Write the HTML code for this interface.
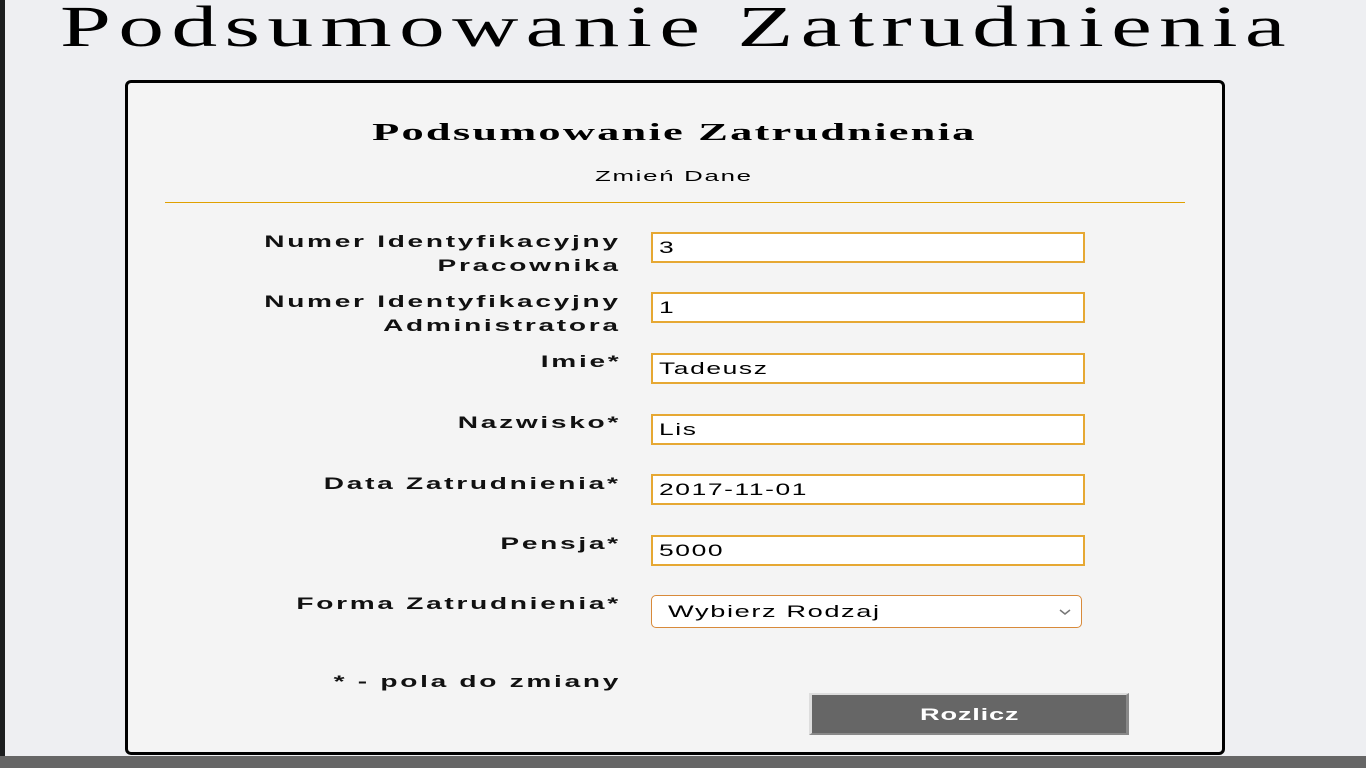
<!DOCTYPE html>
<html><head><meta charset="utf-8"><style>
body{margin:0;width:1366px;height:768px;background:#eeeff2;position:relative;overflow:hidden;font-family:"Liberation Sans",sans-serif}
.lstrip{position:absolute;left:0;top:0;width:5px;height:768px;background:#1c1e1f}
.bstrip{position:absolute;left:0;top:756px;width:1366px;height:12px;background:#666}
h1{position:absolute;left:60px;top:-7px;margin:0;font-family:"Liberation Serif",serif;font-weight:normal;font-size:58px;letter-spacing:4.6px;white-space:nowrap;color:#000;transform:scaleX(1.58);transform-origin:left top}
.card{position:absolute;left:125px;top:80px;width:1094px;height:669px;border:3px solid #000;border-radius:6px;background:#f4f4f4}
.c{position:absolute;left:674px;width:0;white-space:nowrap;display:flex;justify-content:center}
h2{margin:0;font-family:"Liberation Serif",serif;font-size:24px;font-weight:bold;letter-spacing:1.2px;transform:scaleX(1.85);white-space:nowrap}
.sub{font-size:15px;letter-spacing:1px;transform:scaleX(1.72);white-space:nowrap}
.hr{position:absolute;left:165px;width:1020px;top:202px;height:1px;background:#e0a000}
.lab{position:absolute;right:745px;text-align:right;font-weight:bold;font-size:16.5px;letter-spacing:1.6px;line-height:24px;color:#111;transform:scaleX(1.7);transform-origin:right top;white-space:nowrap}
.inp{position:absolute;left:651px;width:424px;height:27px;background:#fff;border:2px solid #e6a833;font-size:16.5px;letter-spacing:1px;line-height:29px;padding-left:6px;box-sizing:content-box}
.inp span,.sel span,.btn span{display:inline-block;transform:scaleX(1.6);transform-origin:left center}
.sel{position:absolute;left:651px;top:595px;width:413px;height:31px;border:1px solid #d88a3a;border-radius:5px;background:#fff;padding-left:16px;font-size:17px;letter-spacing:1px;line-height:32px}
.btn{position:absolute;left:809px;top:693px;width:314px;height:38px;background:#666;border-top:2px solid #ddd;border-left:3px solid #ddd;border-right:3px solid #888;border-bottom:2px solid #888;color:#fff;font-weight:bold;font-size:17px;line-height:39px;letter-spacing:0.5px}
.btn span{position:absolute;left:108px;transform-origin:left center}
</style></head><body>
<div class="lstrip"></div>
<h1>Podsumowanie Zatrudnienia</h1>
<div class="card"></div>
<div class="c" style="top:120px"><h2>Podsumowanie Zatrudnienia</h2></div>
<div class="c" style="top:168px"><div class="sub">Zmień Dane</div></div>
<div class="hr"></div>
<div class="lab" style="top:230px">Numer Identyfikacyjny<br>Pracownika</div>
<div class="inp" style="top:232px"><span>3</span></div>
<div class="lab" style="top:290px">Numer Identyfikacyjny<br>Administratora</div>
<div class="inp" style="top:292px"><span>1</span></div>
<div class="lab" style="top:350px">Imie*</div>
<div class="inp" style="top:353px"><span>Tadeusz</span></div>
<div class="lab" style="top:411px">Nazwisko*</div>
<div class="inp" style="top:414px"><span>Lis</span></div>
<div class="lab" style="top:472px">Data Zatrudnienia*</div>
<div class="inp" style="top:474px"><span>2017-11-01</span></div>
<div class="lab" style="top:532px">Pensja*</div>
<div class="inp" style="top:535px"><span>5000</span></div>
<div class="lab" style="top:592px">Forma Zatrudnienia*</div>
<div class="sel"><span>Wybierz Rodzaj</span><svg style="position:absolute;right:10px;top:13px" width="12" height="7" viewBox="0 0 12 7"><path d="M1 1l5 4 5-4" fill="none" stroke="#777" stroke-width="1.5"/></svg></div>
<div class="lab" style="top:670px">* - pola do zmiany</div>
<div class="btn"><span>Rozlicz</span></div>
<div class="bstrip"></div>
</body></html>
